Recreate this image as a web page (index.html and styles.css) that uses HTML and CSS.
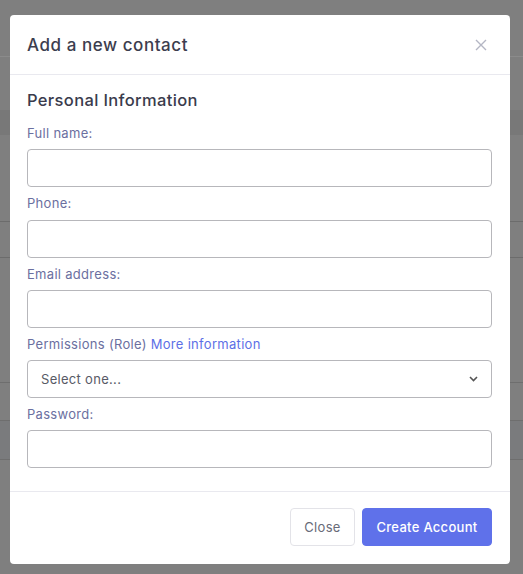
FILE: index.html
```html
<!DOCTYPE html>
<html lang="en">
<head>
<meta charset="utf-8">
<title>Add a new contact</title>
<link rel="stylesheet" href="styles.css">
</head>
<body>
<div class="page">
  <div class="bg-row r1"></div>
  <div class="bg-row r2"></div>
  <div class="bg-row r3"></div>
  <div class="bg-row r4"></div>
  <div class="bg-row r5"></div>
  <div class="bg-row r6"></div>
  <div class="bg-row r7"></div>
  <div class="bg-row r8"></div>
  <div class="bg-row r9"></div>
</div>
<div class="overlay">
  <div class="modal">
    <div class="modal-header">
      <h2 class="modal-title">Add a new contact</h2>
      <button class="close-x" type="button" aria-label="Close">
        <svg width="12" height="12" viewBox="0 0 12 12"><path d="M1 1L11 11M11 1L1 11" stroke="#b4b6c4" stroke-width="1.4" fill="none"/></svg>
      </button>
    </div>
    <div class="modal-body">
      <h3 class="section-title">Personal Information</h3>
      <label class="field-label">Full name:</label>
      <input class="field" type="text">
      <label class="field-label">Phone:</label>
      <input class="field" type="text">
      <label class="field-label">Email address:</label>
      <input class="field" type="text">
      <label class="field-label">Permissions (Role) <a class="link" href="#">More information</a></label>
      <div class="select">
        <span>Select one...</span>
        <svg width="9" height="6" viewBox="0 0 9 6"><path d="M1 1L4.5 4.5L8 1" stroke="#555" stroke-width="1.6" fill="none"/></svg>
      </div>
      <label class="field-label">Password:</label>
      <input class="field" type="password">
    </div>
    <div class="modal-footer">
      <button class="btn btn-light" type="button">Close</button>
      <button class="btn btn-primary" type="button">Create Account</button>
    </div>
  </div>
</div>
</body>
</html>
```
FILE: styles.css
```css
* { box-sizing: border-box; }
html, body { margin: 0; padding: 0; }
body {
  width: 523px;
  height: 574px;
  overflow: hidden;
  background: #7f7f7f;
  font-family: "Inter", "Open Sans", sans-serif;
  position: relative;
}
.page { display: flex; flex-direction: column; }
.bg-row { width: 100%; }
.r1 { height: 57px; border-bottom: 1px solid #8b8b8b; }
.r2 { height: 53px; }
.r3 { height: 25px; background: #787878; }
.r4 { height: 87px; border-bottom: 1px solid #6c6c6c; }
.r5 { height: 36px; border-bottom: 1px solid #6c6c6c; }
.r6 { height: 125px; border-bottom: 1px solid #6e6e6e; }
.r7 { height: 38px; border-bottom: 1px solid #6e6e6e; }
.r8 { height: 39px; background: #7a7b7d; border-bottom: 1px solid #6e6e6e; }
.r9 { height: 100px; }

.overlay {
  position: absolute;
  inset: 0;
  padding: 15px 13px 0 10px;
}
.modal {
  width: 500px;
  height: 549px;
  background: #fff;
  border-radius: 4px;
  display: flex;
  flex-direction: column;
}
.modal-header {
  height: 60px;
  border-bottom: 1px solid #e9e9ef;
  display: flex;
  align-items: center;
  justify-content: space-between;
  padding: 0 23px 0 17px;
}
.modal-title {
  margin: 0;
  font-size: 17px;
  font-weight: 500;
  letter-spacing: 0.55px;
  color: #3c3d4e;
}
.close-x {
  border: 0;
  background: none;
  padding: 0;
  width: 12px;
  height: 12px;
  display: flex;
}
.modal-body {
  padding: 13px 18px 17px 17px;
  display: flex;
  flex-direction: column;
}
.section-title {
  margin: 0 0 11px;
  font-size: 16.5px;
  line-height: 24px;
  font-weight: 500;
  letter-spacing: 0.35px;
  color: #3a3b4c;
}
.field-label {
  font-size: 13px;
  line-height: 20.3px;
  letter-spacing: 0.3px;
  color: #6b6f9f;
  margin-bottom: 6px;
}
.link { color: #5d6fe6; text-decoration: none; }
.field {
  height: 38px;
  border: 1px solid #b7b7bb;
  border-radius: 4px;
  margin: 0 0 6px;
  font: inherit;
}
.select {
  height: 38px;
  border: 1px solid #b7b7bb;
  border-radius: 4px;
  margin: 0 0 6px;
  display: flex;
  align-items: center;
  justify-content: space-between;
  padding: 0 13px 0 13px;
  font-size: 13px;
  letter-spacing: 0.3px;
  color: #585a66;
}
.modal-footer {
  border-top: 1px solid #e9e9ef;
  display: flex;
  justify-content: flex-end;
  gap: 7px;
  padding: 16px 18px 0 0;
}
.btn {
  height: 38px;
  border-radius: 4px;
  font-family: inherit;
  font-size: 13px;
  letter-spacing: 0.3px;
  padding: 0 10px;
}
.btn-light {
  background: #fff;
  border: 1px solid #e3e3e8;
  color: #686a78;
  width: 65px;
}
.btn-primary {
  background: #5f71ea;
  border: 1px solid #5f71ea;
  color: #fff;
  font-weight: 500;
  width: 130px;
}
```
